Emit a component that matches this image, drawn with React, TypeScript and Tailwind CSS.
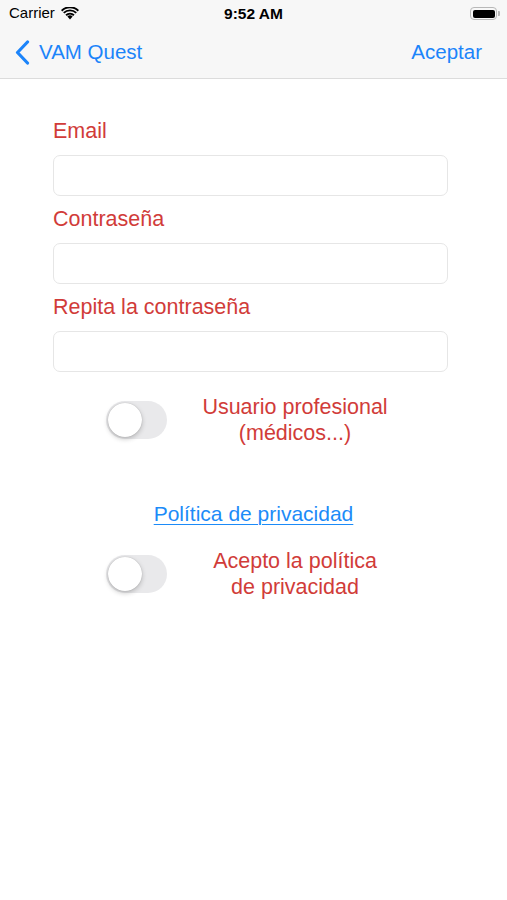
import React, { useState } from 'react';

const font = { fontFamily: '"Liberation Sans", Arial, sans-serif' };

function Toggle({ on, onChange }: { on: boolean; onChange: () => void }) {
  return (
    <button
      onClick={onChange}
      className={`relative w-[61px] h-[38px] rounded-full flex-shrink-0 transition-colors ${on ? 'bg-[#34c759]' : 'bg-[#e9e9eb]'}`}
    >
      <span
        className={`absolute top-[2px] w-[34px] h-[34px] rounded-full bg-white shadow-[0_2px_5px_rgba(0,0,0,0.22),0_0_1px_rgba(0,0,0,0.25)] transition-all ${on ? 'left-[25px]' : 'left-[2px]'}`}
      />
    </button>
  );
}

function Field({ label, type = 'text' }: { label: string; type?: string }) {
  return (
    <div className="flex flex-col">
      <label className="text-[21.5px] leading-[26px] text-[#d13c39] mb-[11px]">{label}</label>
      <input
        type={type}
        className="h-[41px] w-full rounded-[7px] border border-[#e6e6e6] bg-white px-2 text-[18px] outline-none"
      />
    </div>
  );
}

export default function App() {
  const [pro, setPro] = useState(false);
  const [accept, setAccept] = useState(false);

  return (
    <div className="w-[507px] min-h-[900px] bg-white text-black" style={font}>
      {/* Barra de estado + navegación */}
      <div className="bg-[#f7f7f7] border-b border-[#dcdcdc]">
        <div className="h-[27px] flex items-center justify-between px-[9px] relative">
          <div className="flex items-center gap-[6px] text-[15px]">
            <span>Carrier</span>
            <svg width="18" height="13" viewBox="0 0 18 13">
              <path d="M9 12.5 L6.4 9.6 A3.7 3.7 0 0 1 11.6 9.6 Z" fill="#000" />
              <path d="M4.4 7.6 A6.6 6.6 0 0 1 13.6 7.6 L12.3 9 A4.8 4.8 0 0 0 5.7 9 Z" fill="#000" />
              <path d="M2.1 5.3 A9.8 9.8 0 0 1 15.9 5.3 L14.6 6.6 A8 8 0 0 0 3.4 6.6 Z" fill="#000" />
              <path d="M0 3 A12.8 12.8 0 0 1 18 3 L16.7 4.4 A11 11 0 0 0 1.3 4.4 Z" fill="#000" />
            </svg>
          </div>
          <span className="absolute left-1/2 -translate-x-1/2 text-[15.5px] font-bold">9:52 AM</span>
          <div className="flex items-center mr-[-2px]">
            <div className="w-[27px] h-[13px] rounded-[4px] border border-[#b8b8b8] p-[1.5px]">
              <div className="w-full h-full bg-black rounded-[2px]" />
            </div>
            <div className="w-[2px] h-[5px] bg-[#b8b8b8] rounded-r-[1px] ml-[1px]" />
          </div>
        </div>
        <div className="h-[51px] flex items-center justify-between pl-[15px] pr-[25px] text-[20.5px] text-[#1c84fa]">
          <button className="flex items-center gap-[9px]">
            <svg width="15" height="25" viewBox="0 0 15 25">
              <path d="M12.5 2 L2.5 12.5 L12.5 23" fill="none" stroke="#1c84fa" strokeWidth="3.2" strokeLinecap="round" strokeLinejoin="round" />
            </svg>
            <span>VAM Quest</span>
          </button>
          <button>Aceptar</button>
        </div>
      </div>

      {/* Formulario */}
      <div className="ml-[53px] w-[395px] pt-[39px] flex flex-col gap-[10px]">
        <Field label="Email" type="email" />
        <Field label="Contraseña" type="password" />
        <Field label="Repita la contraseña" type="password" />
      </div>

      <div className="ml-[106px] mt-[22px] flex items-center gap-[23px]">
        <Toggle on={pro} onChange={() => setPro(!pro)} />
        <p className="w-[210px] text-center text-[21.5px] leading-[26px] text-[#d13c39]">
          Usuario profesional
          <br />
          (médicos...)
        </p>
      </div>

      <div className="mt-[55px] flex justify-center">
        <a href="#" className="text-[21px] leading-[26px] text-[#1c8bf8] underline underline-offset-[3px] decoration-1">
          Política de privacidad
        </a>
      </div>

      <div className="ml-[106px] mt-[21px] flex items-center gap-[23px]">
        <Toggle on={accept} onChange={() => setAccept(!accept)} />
        <p className="w-[210px] text-center text-[21.5px] leading-[26px] text-[#d13c39]">
          Acepto la política
          <br />
          de privacidad
        </p>
      </div>
    </div>
  );
}
